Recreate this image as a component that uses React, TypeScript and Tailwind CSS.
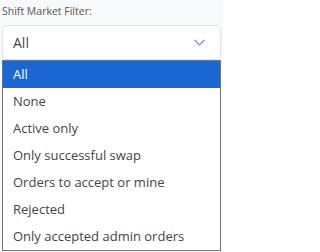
import React from "react";

const options = [
  "All",
  "None",
  "Active only",
  "Only successful swap",
  "Orders to accept or mine",
  "Rejected",
  "Only accepted admin orders",
];

export default function App() {
  return (
    <div className="w-[223px] h-[252px] bg-[#f8f9fa] overflow-hidden">
      <div className="h-[25px] pl-[2px] pt-[3px] text-[10.5px] leading-[16px] text-[#555] font-['Open_Sans',sans-serif]">
        Shift Market Filter:
      </div>
      <div className="mx-[2px] h-[35px] rounded-[5px] border border-[#dee2e6] bg-white flex items-center justify-between pl-[10px] pr-[15px] font-['Open_Sans',sans-serif] text-[14px] text-[#444]">
        <span>All</span>
        <svg width="11" height="7" viewBox="0 0 11 7" fill="none">
          <path d="M0.5 0.8 L5.5 5.8 L10.5 0.8" stroke="#6b7fd7" strokeWidth="1.2" />
        </svg>
      </div>
      <div className="ml-[2px] w-[219px] border border-[#767676] bg-white font-['Open_Sans',sans-serif] text-[13px]">
        {options.map((o, i) => (
          <div
            key={o}
            className={
              i === 0
                ? "h-[27px] pl-[10px] flex items-center bg-[#1a66d2] text-white"
                : "h-[27px] pl-[10px] flex items-center text-[#444]"
            }
          >
            {o}
          </div>
        ))}
      </div>
    </div>
  );
}
